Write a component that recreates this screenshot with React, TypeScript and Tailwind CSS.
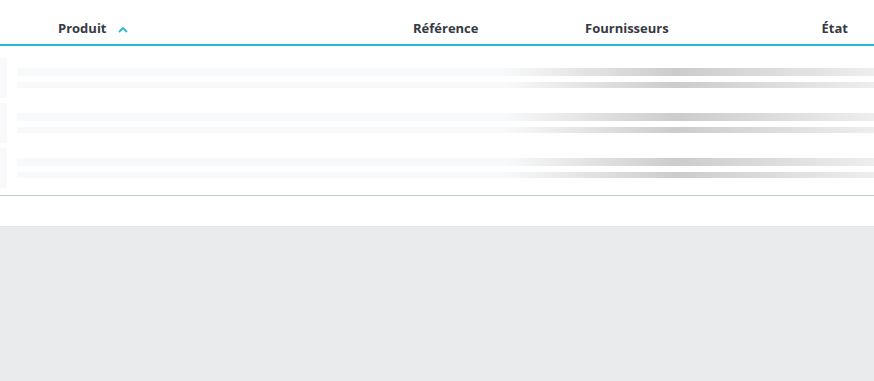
import React from 'react';

const shimmer =
  'bg-[linear-gradient(to_right,#f8f9fa_0%,#f8f9fa_57%,#cccccc_77%,#eeeeee_100%)]';

const SkeletonRow: React.FC = () => (
  <div className="flex h-10 items-stretch gap-[10px]">
    <div className="w-[7px] bg-[#f8f9fa]" />
    <div className="flex flex-1 flex-col pt-[10px]">
      <div className={`h-2 ${shimmer}`} />
      <div className={`mt-[6px] h-[6px] ${shimmer}`} />
    </div>
  </div>
);

export default function App() {
  return (
    <div
      className="flex h-[381px] w-[874px] flex-col bg-[#eaebed]"
      style={{ fontFamily: '"Open Sans", "Noto Sans", sans-serif' }}
    >
      <div className="bg-white">
        <div className="flex h-[46px] items-center border-b-2 border-[#25b9d7] pt-[14px] text-[13px] font-bold text-[#363a41]">
          <div className="flex w-[413px] items-center pl-[58px]">
            <span>Produit</span>
            <svg
              className="ml-[11px]"
              width="10"
              height="7"
              viewBox="0 0 10 7"
              fill="none"
            >
              <path d="M1 6 L5 2 L9 6" stroke="#25b9d7" strokeWidth="1.8" />
            </svg>
          </div>
          <div className="w-[172px]">Référence</div>
          <div className="flex-1">Fournisseurs</div>
          <div className="pr-[26px]">État</div>
        </div>
        <div className="flex flex-col gap-[5px] border-b border-[#bbcdd2] pb-[7px] pt-3">
          <SkeletonRow />
          <SkeletonRow />
          <SkeletonRow />
        </div>
        <div className="h-[30px]" />
      </div>
      <div className="h-px bg-[#e3e6e8]" />
    </div>
  );
}
